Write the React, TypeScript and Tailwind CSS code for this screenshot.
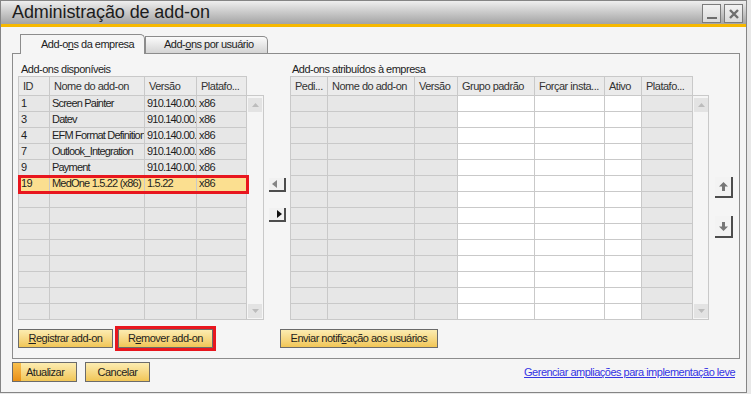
import clsx from "clsx";

// SAP B1 style "Administração de add-on" dialog.

const FONT = "font-['Liberation_Sans',Arial,sans-serif]";

type Col = { w: string; label: string; white?: boolean; tight?: boolean };

const leftCols: Col[] = [
  { w: "w-[31px]", label: "ID" },
  { w: "w-[95px]", label: "Nome do add-on", tight: true },
  { w: "w-[52px]", label: "Versão", tight: true },
  { w: "w-[50px]", label: "Platafo..." }
];

const rightCols: Col[] = [
  { w: "w-[37px]", label: "Pedi..." },
  { w: "w-[87px]", label: "Nome do add-on" },
  { w: "w-[43px]", label: "Versão" },
  { w: "w-[77px]", label: "Grupo padrão", white: true },
  { w: "w-[70px]", label: "Forçar insta...", white: true },
  { w: "w-[37px]", label: "Ativo", white: true },
  { w: "w-[51px]", label: "Platafo..." }
];

const available: string[][] = [
  ["1", "Screen Painter", "910.140.00.", "x86"],
  ["3", "Datev", "910.140.00.", "x86"],
  ["4", "EFM Format Definition", "910.140.00.", "x86"],
  ["7", "Outlook_Integration", "910.140.00.", "x86"],
  ["9", "Payment", "910.140.00.", "x86"],
  ["19", "MedOne 1.5.22 (x86)", "1.5.22", "x86"]
];

const SELECTED = 5;
const ROW_COUNT = 14;

function GridHeader({ cols }: { cols: Col[] }) {
  return (
    <div className="flex h-[20px] border-t border-l border-[#c9c9c9]">
      {cols.map((col) => (
        <div
          key={col.label}
          className={clsx(
            col.w,
            "shrink-0 overflow-hidden whitespace-nowrap border-r border-b border-[#c9c9c9] bg-[#ebebeb] pl-[4px] leading-[18px] text-[#333]"
          )}
        >
          {col.label}
        </div>
      ))}
    </div>
  );
}

function GridBody({
  cols,
  rows,
  selected
}: {
  cols: Col[];
  rows: string[][];
  selected?: number;
}) {
  return (
    <div className="relative border-l border-[#c9c9c9]">
      {Array.from({ length: ROW_COUNT }, (_, r) => (
        <div key={r} className="flex h-[16px]">
          {cols.map((col, c) => (
            <div
              key={col.label}
              className={clsx(
                col.w,
                "shrink-0 overflow-hidden whitespace-nowrap border-r border-b border-[#c9c9c9] pl-[2px] leading-[15px] text-[#1e1e1e]",
                col.tight && "tracking-[-0.8px]",
                r === selected
                  ? "bg-[#fbdf90]"
                  : col.white
                    ? "bg-white"
                    : "bg-[#e7e7e7]"
              )}
            >
              {rows[r]?.[c] ?? ""}
            </div>
          ))}
        </div>
      ))}
      {selected !== undefined ? (
        <div className="pointer-events-none absolute top-[79px] -left-[1px] z-10 h-[19px] w-[231px] border-[3px] border-[#e8161e]" />
      ) : null}
    </div>
  );
}

function ScrollBox({ down }: { down?: boolean }) {
  return (
    <div className="flex h-[14px] w-[14px] items-center justify-center bg-[#e3e3e3]">
      <svg width="7" height="4" viewBox="0 0 7 4">
        <path
          d={down ? "M0 0H7L3.5 4Z" : "M0 4H7L3.5 0Z"}
          fill="#bcbcbc"
        />
      </svg>
    </div>
  );
}

function ScrollColumn({ w }: { w: string }) {
  return (
    <div
      className={clsx(
        w,
        "mt-[19px] flex h-[225px] shrink-0 flex-col justify-between border-t border-r border-b border-[#c9c9c9] pt-[2px] pb-[1px] pl-[1px]"
      )}
    >
      <ScrollBox />
      <ScrollBox down />
    </div>
  );
}

function GoldButton({
  children,
  className
}: {
  children: React.ReactNode;
  className?: string;
}) {
  return (
    <button
      type="button"
      className={clsx(
        "flex shrink-0 items-center justify-center whitespace-nowrap border border-[#6b6b6b] bg-linear-to-b from-[#fcecb0] to-[#f1c655] text-[11px] leading-none text-[#1e1e1e]",
        className
      )}
    >
      {children}
    </button>
  );
}

function SideArrow({ dir }: { dir: "left" | "right" }) {
  return (
    <div
      className={clsx(
        "flex h-[14px] w-[17px] items-center border-r-2 border-b-2 border-[#4d4d4d] bg-[#f1f1f1]",
        dir === "left" ? "pl-[3px]" : "pl-[8px]"
      )}
    >
      <svg width="5" height="8" viewBox="0 0 5 8">
        {dir === "left" ? (
          <path d="M5 0V8L0 4Z" fill="#858585" />
        ) : (
          <path d="M0 0V8L5 4Z" fill="#111" />
        )}
      </svg>
    </div>
  );
}

function MoveArrow({ dir, className }: { dir: "up" | "down"; className?: string }) {
  return (
    <div
      className={clsx(
        "flex w-[18px] items-center justify-center border-r-2 border-b-2 border-[#4d4d4d] bg-[#f3f3f3]",
        className
      )}
    >
      <svg width="9" height="9" viewBox="0 0 9 9">
        {dir === "up" ? (
          <path d="M4.5 0L9 4.5H6V9H3V4.5H0Z" fill="#777" />
        ) : (
          <path d="M4.5 9L9 4.5H6V0H3V4.5H0Z" fill="#777" />
        )}
      </svg>
    </div>
  );
}

export default function App() {
  return (
    <div
      className={clsx(
        FONT,
        "h-[394px] w-[751px] bg-[#e8e8e8] text-[11px] tracking-[-0.5px] text-[#1e1e1e]"
      )}
    >
      <div className="flex h-[393px] w-[747px] flex-col border border-[#858585] bg-[#f5f5f5]">
        {/* Title bar */}
        <div className="flex h-[23px] shrink-0 items-start justify-between bg-linear-to-b from-[#efefef] to-[#a4a4a4] pl-[11px] pr-[3px]">
          <span className="text-[18px] leading-[23px] tracking-[-0.1px] text-[#1c1c1c]">
            Administração de add-on
          </span>
          <div className="flex gap-[3px] pt-[3px]">
            <div className="flex h-[19px] w-[19px] items-end justify-center border border-[#7c7c7c] bg-linear-to-b from-[#f2f2f2] to-[#dadada] pb-[3px]">
              <div className="h-[2px] w-[10px] bg-[#6e6e6e]" />
            </div>
            <div className="flex h-[19px] w-[19px] items-center justify-center border border-[#7c7c7c] bg-linear-to-b from-[#f2f2f2] to-[#dadada]">
              <svg width="10" height="10" viewBox="0 0 10 10">
                <path d="M1 1L9 9M9 1L1 9" stroke="#6e6e6e" strokeWidth="2.4" />
              </svg>
            </div>
          </div>
        </div>
        <div className="h-[3px] shrink-0 bg-[#f6b800]" />

        {/* Body */}
        <div className="flex flex-1 flex-col pt-[7px] pl-[11px]">
          {/* Tabs */}
          <div className="flex h-[19px] items-end">
            <div className="relative z-10 mb-[-1px] ml-[8px] h-[20px] w-[125px] rounded-tr-[5px] border-t border-r border-l border-[#8c8c8c] bg-[#f5f5f5] pl-[20px] leading-[18px]">
              Add-o<span className="underline">n</span>s da empresa
            </div>
            <div className="h-[17px] w-[123px] rounded-tr-[5px] border-t border-r border-l border-[#8c8c8c] bg-linear-to-b from-[#fbfbfb] to-[#d4d4d4] pl-[18px] leading-[15px]">
              Add-<span className="underline">o</span>ns por usuário
            </div>
          </div>

          {/* Tab panel */}
          <div className="flex h-[306px] w-[728px] flex-col border border-[#8c8c8c] bg-[#f5f5f5] pl-[5px]">
            <div className="flex items-start">
              {/* Available add-ons */}
              <div className="flex w-[246px] shrink-0 flex-col">
                <div className="h-[22px] pt-[8px] pl-[3px] leading-[14px]">
                  Add-ons disponíveis
                </div>
                <div className="flex">
                  <div className="w-[229px] shrink-0">
                    <GridHeader cols={leftCols} />
                    <GridBody cols={leftCols} rows={available} selected={SELECTED} />
                  </div>
                  <ScrollColumn w="w-[17px]" />
                </div>
              </div>

              {/* Transfer arrows */}
              <div className="ml-[5px] flex w-[17px] shrink-0 flex-col">
                <div className="mt-[124px]">
                  <SideArrow dir="left" />
                </div>
                <div className="mt-[16px]">
                  <SideArrow dir="right" />
                </div>
              </div>

              {/* Assigned add-ons */}
              <div className="ml-[4px] flex w-[419px] shrink-0 flex-col">
                <div className="h-[22px] pt-[8px] pl-[2px] leading-[14px]">
                  Add-ons atribuídos à empresa
                </div>
                <div className="flex">
                  <div className="w-[403px] shrink-0">
                    <GridHeader cols={rightCols} />
                    <GridBody cols={rightCols} rows={[]} />
                  </div>
                  <ScrollColumn w="w-[16px]" />
                </div>
              </div>

              {/* Order arrows */}
              <div className="ml-[6px] flex w-[18px] shrink-0 flex-col">
                <MoveArrow dir="up" className="mt-[123px] h-[21px]" />
                <MoveArrow dir="down" className="mt-[18px] h-[22px]" />
              </div>
            </div>

            <div className="mt-[9px] flex items-start">
              <GoldButton className="h-[19px] w-[95px]">
                <span className="underline">R</span>egistrar add-on
              </GoldButton>
              <GoldButton className="ml-[5px] h-[19px] w-[95px] outline-[3px] outline-[#e8161e] outline-solid">
                R<span className="underline">e</span>mover add-on
              </GoldButton>
              <GoldButton className="ml-[67px] h-[19px] w-[158px]">
                Enviar notifi<span className="underline">c</span>ação aos usuários
              </GoldButton>
            </div>
          </div>

          {/* Footer */}
          <div className="mt-[3px] flex h-[20px] items-center">
            <button
              type="button"
              className="flex h-[20px] w-[65px] items-stretch border border-[#6b6b6b] bg-linear-to-b from-[#fcecb0] to-[#f1c655] text-[11px] text-[#1e1e1e]"
            >
              <span className="w-[8px] bg-linear-to-b from-[#f8c04c] to-[#e98f12]" />
              <span className="flex items-center pl-[5px]">Atualizar</span>
            </button>
            <GoldButton className="ml-[8px] h-[20px] w-[65px]">Cancelar</GoldButton>
            <span className="mr-[11px] ml-auto text-[#3434e4] underline">
              Gerenciar ampliações para implementação leve
            </span>
          </div>
        </div>
      </div>
    </div>
  );
}
